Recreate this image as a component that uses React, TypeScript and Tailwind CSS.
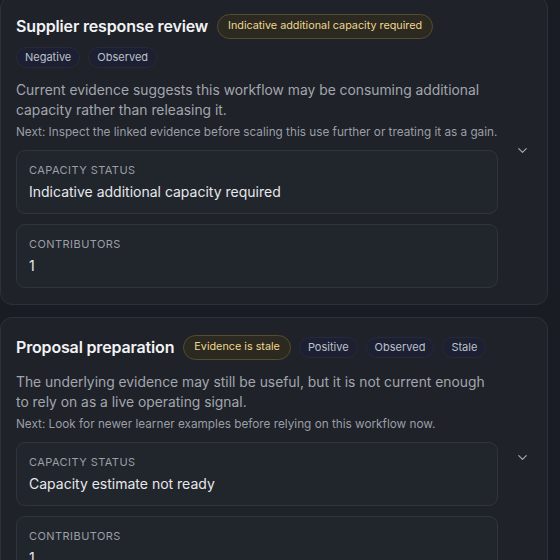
import { ChevronDown } from "lucide-react";

interface Stat {
  label: string;
  value: string;
}

interface Workflow {
  title: string;
  badge: string;
  tags: string[];
  tagsInline: boolean;
  summary: string;
  next: string;
  stats: Stat[];
}

const workflows: Workflow[] = [
  {
    title: "Supplier response review",
    badge: "Indicative additional capacity required",
    tags: ["Negative", "Observed"],
    tagsInline: false,
    summary:
      "Current evidence suggests this workflow may be consuming additional capacity rather than releasing it.",
    next: "Next: Inspect the linked evidence before scaling this use further or treating it as a gain.",
    stats: [
      { label: "Capacity status", value: "Indicative additional capacity required" },
      { label: "Contributors", value: "1" },
    ],
  },
  {
    title: "Proposal preparation",
    badge: "Evidence is stale",
    tags: ["Positive", "Observed", "Stale"],
    tagsInline: true,
    summary:
      "The underlying evidence may still be useful, but it is not current enough to rely on as a live operating signal.",
    next: "Next: Look for newer learner examples before relying on this workflow now.",
    stats: [
      { label: "Capacity status", value: "Capacity estimate not ready" },
      { label: "Contributors", value: "1" },
    ],
  },
];

function Tag({ children }: { children: string }) {
  return (
    <span className="inline-flex h-[21px] items-center rounded-full border border-[#262a3a] bg-[#1d2032] px-2 text-[11px] text-[#bcc0ca]">
      {children}
    </span>
  );
}

function StatusBadge({ children }: { children: string }) {
  return (
    <span className="inline-flex h-[25px] items-center rounded-full border border-[#574b31] bg-[#2c2920] px-[10px] text-[10.8px] text-[#ecd78f]">
      {children}
    </span>
  );
}

function WorkflowCard({ item }: { item: Workflow }) {
  return (
    <section className="flex items-center gap-3 rounded-[12px] border border-[#2d3139] bg-[#1f2229] py-4 pl-[15px] pr-[13px]">
      <div className="min-w-0 flex-1">
        <div className="flex flex-wrap items-center gap-2">
          <h2 className="mr-px text-[16px] font-semibold leading-[26px] tracking-[-0.01em] text-[#f2f3f5]">
            {item.title}
          </h2>
          <StatusBadge>{item.badge}</StatusBadge>
          {item.tagsInline && item.tags.map((t) => <Tag key={t}>{t}</Tag>)}
        </div>
        {!item.tagsInline && (
          <div className="mt-2 flex gap-2">
            {item.tags.map((t) => (
              <Tag key={t}>{t}</Tag>
            ))}
          </div>
        )}
        <p className="mt-3 text-[13.85px] leading-5 text-[#a2a6ae]">{item.summary}</p>
        <p className="mt-[3px] text-[11.75px] leading-[18px] text-[#9a9ea6]">{item.next}</p>

        <div className="mt-[9px] space-y-[10px]">
          {item.stats.map((s) => (
            <div
              key={s.label}
              className="rounded-[9px] border border-[#30343c] bg-[#21252c] px-3 py-[11px]"
            >
              <p className="text-[11px] uppercase leading-4 tracking-[0.04em] text-[#9b9fa7]">
                {s.label}
              </p>
              <p className="mt-1 text-[14px] leading-5 text-[#e7e8eb]">{s.value}</p>
            </div>
          ))}
        </div>
      </div>
      <button className="flex h-6 w-6 items-center justify-center text-[#a0a4ac]">
        <ChevronDown className="h-[15px] w-[15px]" strokeWidth={2} />
      </button>
    </section>
  );
}

export default function App() {
  return (
    <div
      className="min-h-[560px] overflow-hidden bg-[#191c22] pr-3"
      style={{ fontFamily: "Inter, 'Noto Sans', sans-serif" }}
    >
      <div className="-mt-[4px] space-y-3">
        {workflows.map((w) => (
          <WorkflowCard key={w.title} item={w} />
        ))}
      </div>
    </div>
  );
}
